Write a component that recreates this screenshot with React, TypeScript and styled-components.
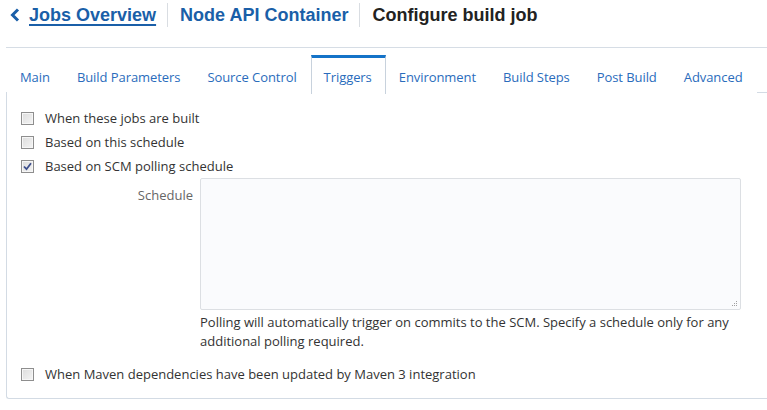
import styled, { createGlobalStyle } from 'styled-components';

const GlobalStyle = createGlobalStyle`
  html, body {
    margin: 0;
    padding: 0;
    background: #ffffff;
  }
  body {
    font-family: "Open Sans", "Noto Sans", sans-serif;
  }
`;

const tabs = [
  'Main',
  'Build Parameters',
  'Source Control',
  'Triggers',
  'Environment',
  'Build Steps',
  'Post Build',
  'Advanced',
];

const Check = ({ checked }: { checked?: boolean }) => (
  <CheckBox>
    {checked && (
      <svg width="9" height="9" viewBox="0 0 9 9">
        <path d="M1 4.5 L3.5 7.2 L8 1.2" fill="none" stroke="#3d4f8c" strokeWidth="1.8" />
      </svg>
    )}
  </CheckBox>
);

const App = () => {
  return (
    <Page>
      <GlobalStyle />
      <Header>
        <BackLink href="#">
          <svg width="10" height="14" viewBox="0 0 10 14">
            <polyline points="8,1.5 2.5,7 8,12.5" fill="none" stroke="#1a5fa8" strokeWidth="3" />
          </svg>
          <Crumb $underline>Jobs Overview</Crumb>
        </BackLink>
        <Separator />
        <Crumb>Node API Container</Crumb>
        <Separator />
        <Title>Configure build job</Title>
      </Header>

      <TabBar>
        {tabs.map((t) => (
          <Tab key={t} $active={t === 'Triggers'}>
            {t}
          </Tab>
        ))}
      </TabBar>

      <Panel>
        <Row>
          <Check />
          <Label>When these jobs are built</Label>
        </Row>
        <Row>
          <Check />
          <Label>Based on this schedule</Label>
        </Row>
        <Row>
          <Check checked />
          <Label>Based on SCM polling schedule</Label>
        </Row>

        <Field>
          <FieldLabel>Schedule</FieldLabel>
          <AreaWrap>
            <Area />
            <Grip>
              <svg width="7" height="7" viewBox="0 0 7 7">
                <rect x="5" y="1" width="1" height="1" fill="#a0a0a0" />
                <rect x="3" y="3" width="1" height="1" fill="#a0a0a0" />
                <rect x="5" y="3" width="1" height="1" fill="#a0a0a0" />
                <rect x="1" y="5" width="1" height="1" fill="#a0a0a0" />
                <rect x="3" y="5" width="1" height="1" fill="#a0a0a0" />
                <rect x="5" y="5" width="1" height="1" fill="#a0a0a0" />
              </svg>
            </Grip>
          </AreaWrap>
          <span />
          <Help>
            Polling will automatically trigger on commits to the SCM. Specify a schedule only for any
            <br />
            additional polling required.
          </Help>
        </Field>

        <Row $spaced>
          <Check />
          <Label>When Maven dependencies have been updated by Maven 3 integration</Label>
        </Row>
      </Panel>
    </Page>
  );
};

const Page = styled.div`
  padding-left: 6px;
`;

const Header = styled.header`
  display: flex;
  align-items: flex-start;
  height: 47px;
  padding-left: 4px;
  border-bottom: 1px solid #d6dde5;
  font-family: "Liberation Sans", Arial, sans-serif;
`;

const BackLink = styled.a`
  display: flex;
  align-items: center;
  gap: 9px;
  height: 30px;
  text-decoration: none;
`;

const Crumb = styled.span<{ $underline?: boolean }>`
  display: inline-flex;
  align-items: center;
  height: 30px;
  font-size: 18px;
  font-weight: bold;
  color: #1a5fa8;
  text-decoration: ${(p) => (p.$underline ? 'underline' : 'none')};
  text-decoration-thickness: 2px;
  text-underline-offset: 3px;
`;

const Title = styled.span`
  display: inline-flex;
  align-items: center;
  height: 30px;
  font-size: 18px;
  font-weight: bold;
  color: #222222;
`;

const Separator = styled.span`
  width: 1px;
  height: 24px;
  margin: 3px 12px 0 11px;
  background: #d9dde2;
`;

const TabBar = styled.nav`
  display: flex;
  height: 37px;
  padding-top: 7px;
  padding-left: 1px;
  border-bottom: 1px solid #d3dbe4;
`;

const Tab = styled.div<{ $active?: boolean }>`
  display: flex;
  align-items: center;
  padding: 1px 13px 0 12px;
  height: 35px;
  font-size: 13px;
  letter-spacing: -0.07px;
  color: #2a6cbc;
  cursor: pointer;
  border-top: 3px solid ${(p) => (p.$active ? '#1473c8' : 'transparent')};
  border-left: 1px solid ${(p) => (p.$active ? '#c8d2dd' : 'transparent')};
  border-right: 1px solid ${(p) => (p.$active ? '#c8d2dd' : 'transparent')};
  background: #ffffff;
  margin-bottom: -1px;
`;

const Panel = styled.section`
  border-left: 1px solid #d3dbe4;
  border-bottom: 1px solid #d3dbe4;
  border-bottom-left-radius: 3px;
  padding: 13px 26px 12px 14px;
`;

const Row = styled.label<{ $spaced?: boolean }>`
  display: flex;
  align-items: center;
  height: 24px;
  margin-top: ${(p) => (p.$spaced ? '11px' : '0')};
`;

const CheckBox = styled.span`
  display: inline-flex;
  align-items: center;
  justify-content: center;
  width: 11px;
  height: 11px;
  border: 1px solid #8e8e8e;
  background: linear-gradient(135deg, #dcdcdc 0%, #f4f4f4 100%);
  box-shadow: inset 0 0 0 1px #f6f6f6;
  margin-right: 11px;
`;

const Label = styled.span`
  font-size: 13px;
  color: #333333;
`;

const Field = styled.div`
  display: grid;
  grid-template-columns: 172px 541px;
  column-gap: 7px;
`;

const FieldLabel = styled.div`
  text-align: right;
  padding-top: 8px;
  font-size: 13px;
  color: #666666;
`;

const AreaWrap = styled.div`
  position: relative;
  height: 132px;
`;

const Area = styled.textarea`
  display: block;
  width: 100%;
  height: 100%;
  box-sizing: border-box;
  border: 1px solid #dcdfe3;
  border-radius: 2px;
  background: #fafbfd;
  resize: none;
  outline: none;
`;

const Grip = styled.span`
  position: absolute;
  right: 3px;
  bottom: 3px;
  display: flex;
`;

const Help = styled.p`
  margin: 3px 0 0;
  font-size: 13px;
  line-height: 19px;
  color: #333333;
`;

export default App;
